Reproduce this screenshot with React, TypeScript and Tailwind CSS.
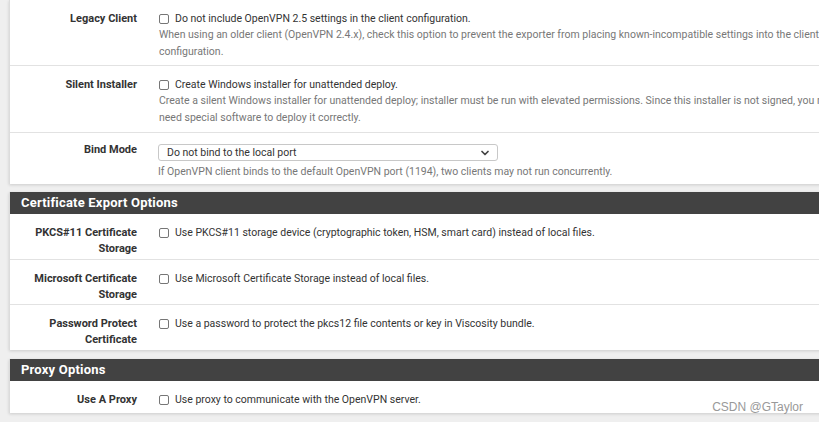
import { ChevronDown } from 'lucide-react';

type Row = {
  label: string[];
  text: string;
  help?: string[];
};

const CLIENT_ROWS: Row[] = [
  {
    label: ['Legacy Client'],
    text: 'Do not include OpenVPN 2.5 settings in the client configuration.',
    help: [
      'When using an older client (OpenVPN 2.4.x), check this option to prevent the exporter from placing known-incompatible settings into the client',
      'configuration.',
    ],
  },
  {
    label: ['Silent Installer'],
    text: 'Create Windows installer for unattended deploy.',
    help: [
      'Create a silent Windows installer for unattended deploy; installer must be run with elevated permissions. Since this installer is not signed, you may',
      'need special software to deploy it correctly.',
    ],
  },
];

const CERT_ROWS: Row[] = [
  { label: ['PKCS#11 Certificate', 'Storage'], text: 'Use PKCS#11 storage device (cryptographic token, HSM, smart card) instead of local files.' },
  { label: ['Microsoft Certificate', 'Storage'], text: 'Use Microsoft Certificate Storage instead of local files.' },
  { label: ['Password Protect', 'Certificate'], text: 'Use a password to protect the pkcs12 file contents or key in Viscosity bundle.' },
];

function Checkbox() {
  return <span className="mt-[3px] h-[10px] w-[10px] shrink-0 rounded-[2px] border border-[#767676] bg-white" />;
}

function Label({ lines }: { lines: string[] }) {
  return (
    <div className="w-[127px] shrink-0 text-right text-[11px] font-bold leading-[15.5px] text-[#333]">
      {lines.map(l => <div key={l}>{l}</div>)}
    </div>
  );
}

function CheckRow({ row, first, height }: { row: Row; first?: boolean; height: string }) {
  return (
    <div className={`flex pt-[11px] ${height} ${first ? '' : 'border-t border-[#e2e2e2]'}`}>
      <Label lines={row.label} />
      <div className="ml-[22px] flex flex-col">
        <div className="flex h-[16px] items-start gap-[6px] leading-[16px] text-[#333]">
          <Checkbox />
          <span className="whitespace-nowrap">{row.text}</span>
        </div>
        {row.help && (
          <div className="leading-[16.5px] text-[#777]">
            {row.help.map(h => <div key={h} className="whitespace-nowrap">{h}</div>)}
          </div>
        )}
      </div>
    </div>
  );
}

function Header({ title }: { title: string }) {
  return (
    <div className="flex h-[22px] items-center bg-[#424242] pl-[11px] text-[13px] font-bold tracking-[0.2px] text-white">
      {title}
    </div>
  );
}

export default function App() {
  return (
    <div className="relative h-[422px] w-[819px] overflow-hidden bg-[#efefef] text-[10.5px]" style={{ fontFamily: 'Roboto, "Liberation Sans", sans-serif' }}>
      <div className="ml-[9px] w-[880px]">
        <div className="border-l border-[#dcdcdc] bg-white shadow-[0_1px_3px_rgba(0,0,0,0.15)]">
          <CheckRow row={CLIENT_ROWS[0]} first height="h-[65px]" />
          <CheckRow row={CLIENT_ROWS[1]} height="h-[67px]" />
          <div className="flex h-[52px] border-t border-[#e2e2e2] pt-[9px]">
            <Label lines={['Bind Mode']} />
            <div className="ml-[21px] flex flex-col pt-[2px]">
              <div className="flex h-[17px] w-[340px] items-center justify-between rounded-[3px] border border-[#c8c8c8] bg-white pl-[8px] pr-[6px] text-[#333]">
                <span>Do not bind to the local port</span>
                <ChevronDown size={12} strokeWidth={3.5} className="text-[#444]" />
              </div>
              <div className="mt-[3px] leading-[16px] text-[#777]">
                If OpenVPN client binds to the default OpenVPN port (1194), two clients may not run concurrently.
              </div>
            </div>
          </div>
        </div>

        <div className="mt-[8px] border-l border-[#dcdcdc] bg-white shadow-[0_1px_3px_rgba(0,0,0,0.15)]">
          <Header title="Certificate Export Options" />
          <CheckRow row={CERT_ROWS[0]} first height="h-[45px]" />
          <CheckRow row={CERT_ROWS[1]} height="h-[45px]" />
          <CheckRow row={CERT_ROWS[2]} height="h-[46px]" />
        </div>

        <div className="mt-[9px] border-l border-[#dcdcdc] bg-white shadow-[0_1px_3px_rgba(0,0,0,0.15)]">
          <Header title="Proxy Options" />
          <CheckRow first height="h-[32px]" row={{ label: ['Use A Proxy'], text: 'Use proxy to communicate with the OpenVPN server.' }} />
        </div>
      </div>

      <div className="absolute right-[16px] top-[398px] text-[12px] text-[#999]" style={{ fontFamily: '"Liberation Sans", Arial, sans-serif' }}>
        CSDN @GTaylor
      </div>
    </div>
  );
}
